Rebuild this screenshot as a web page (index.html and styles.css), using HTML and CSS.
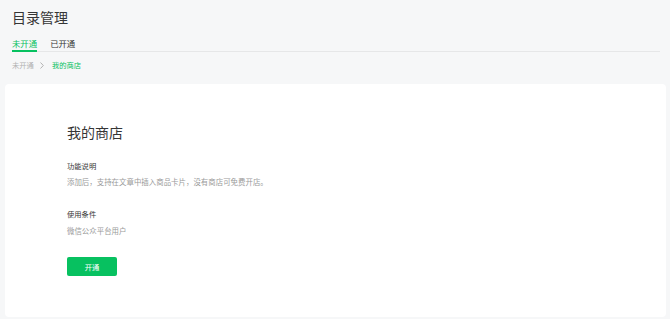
FILE: index.html
```html
<!DOCTYPE html>
<html lang="zh-CN">
<head>
    <meta charset="UTF-8">
    <meta name="viewport" content="width=device-width, initial-scale=1.0">
    <title>目录管理</title>
    <link rel="stylesheet" href="styles.css">
</head>
<body>

<div class="header">
    <h1>目录管理</h1>

    <div class="tabs">
        <span class="tab active">未开通</span>
        <span class="tab">已开通</span>
    </div>

    <div class="breadcrumb">
        <span class="crumb">未开通</span>
        <svg class="sep" width="4" height="7" viewBox="0 0 4 7">
            <path d="M0.5 0.5 L3.3 3.5 L0.5 6.5" fill="none" stroke="#b2b2b2" stroke-width="1"/>
        </svg>
        <span class="crumb current">我的商店</span>
    </div>
</div>

<div class="card">
    <h2>我的商店</h2>

    <div class="section">
        <div class="label">功能说明</div>
        <div class="desc">添加后，支持在文章中插入商品卡片，没有商店可免费开店。</div>
    </div>

    <div class="section">
        <div class="label">使用条件</div>
        <div class="desc">微信公众平台用户</div>
    </div>

    <button class="btn-open">开通</button>
</div>

</body>
</html>
```

FILE: styles.css
```css
body {
    font-family: "Noto Sans CJK SC", "Noto Sans", sans-serif;
    background-color: #f6f7f8;
    color: #353535;
    margin: 0;
    padding: 0;
    height: 319px;
    overflow: hidden;
}

.header {
    padding: 0 10px 0 12px;
}

h1 {
    font-size: 14px;
    font-weight: normal;
    line-height: 20px;
    margin: 0;
    padding-top: 7px;
}

.tabs {
    display: flex;
    gap: 13px;
    margin-top: 10px;
    border-bottom: 1px solid #e6e7e8;
}

.tab {
    font-size: 8.4px;
    line-height: 12px;
    padding-bottom: 1px;
    border-bottom: 2px solid transparent;
    margin-bottom: -1px;
    color: #353535;
}

.tab.active {
    color: #07c160;
    border-bottom-color: #07c160;
}

.breadcrumb {
    display: flex;
    align-items: center;
    margin-top: 7px;
    font-size: 7.3px;
    line-height: 12px;
}

.crumb {
    color: #b2b2b2;
}

.crumb.current {
    color: #07c160;
}

.sep {
    margin: 0 8px 0 6px;
}

.card {
    background: #fff;
    border-radius: 4px;
    margin: 13px 4px 0 5px;
    height: 233px;
    padding: 38px 0 0 62px;
    box-sizing: border-box;
}

h2 {
    font-size: 14px;
    font-weight: normal;
    line-height: 20px;
    margin: 0 0 18px;
}

.section {
    margin-bottom: 20px;
}

.label {
    font-size: 7.3px;
    line-height: 12px;
    color: #353535;
}

.desc {
    font-size: 7.45px;
    line-height: 12px;
    color: #9a9a9a;
    margin-top: 4px;
}

.section + .section .desc {
    margin-top: 5px;
}

.btn-open {
    display: block;
    width: 50px;
    height: 19px;
    padding: 0;
    border: none;
    border-radius: 2px;
    background: #07c160;
    color: #fff;
    font-family: inherit;
    font-size: 7.3px;
    cursor: pointer;
}
```
